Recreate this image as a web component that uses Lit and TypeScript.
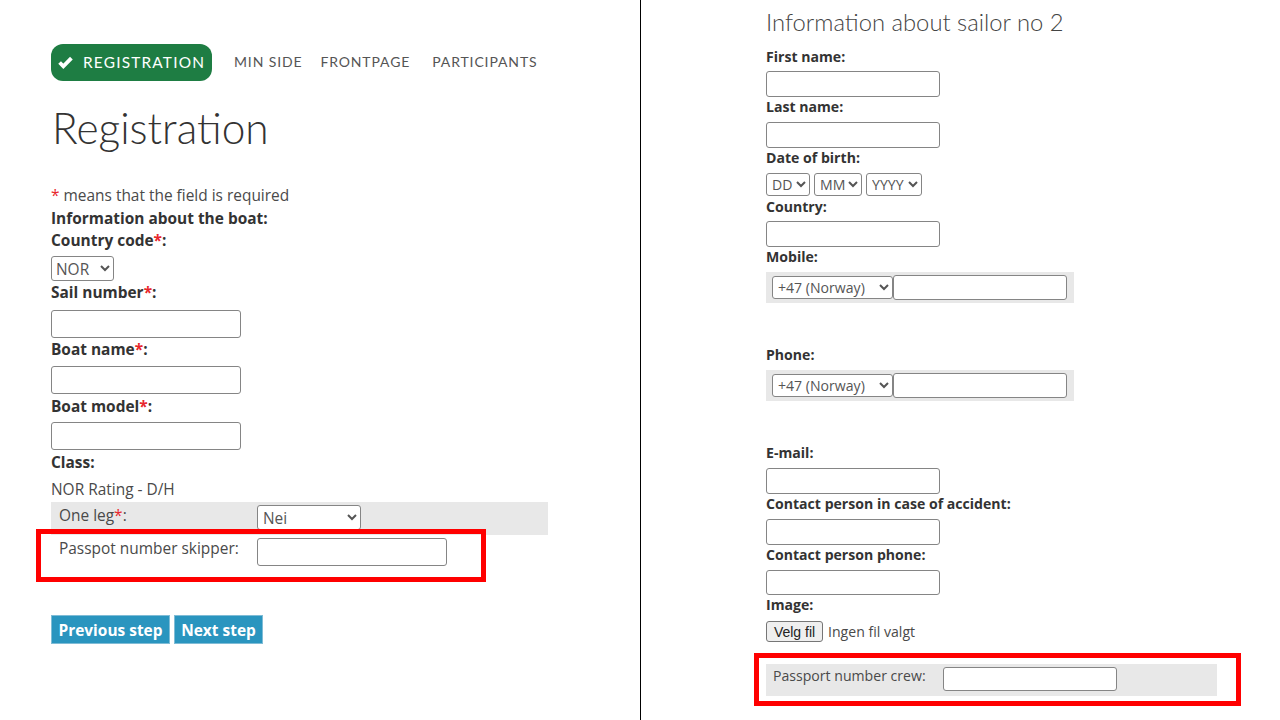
import { LitElement, html, css } from "lit";
import { customElement } from "lit/decorators.js";

@customElement("app-root")
export class AppRoot extends LitElement {
  static styles = css`
    :host { display: block; width: 1280px; height: 720px; position: relative; overflow: hidden; background: #fff; font-family: "Open Sans", sans-serif; color: #4a4a4a; }
    * { box-sizing: border-box; }
    .page { display: flex; height: 720px; }
    .left { width: 640px; padding: 44px 0 0 51px; font-size: 15.45px; }
    .divider { width: 1px; height: 720px; background: #000; }
    .right { flex: 1; padding: 0 0 0 125px; font-size: 14.1px; }
    .nav { display: flex; align-items: center; height: 37px; font-family: Lato, sans-serif; font-size: 14px; letter-spacing: 0.87px; color: #555; text-transform: uppercase; }
    .pill { display: flex; align-items: center; width: 161px; height: 37px; background: #1e7d43; color: #fff; border-radius: 12px; padding: 0 0 2px 7px; font-size: 15.4px; letter-spacing: 1.2px; margin-right: 22px; }
    .pill svg { width: 15px; height: 13px; margin-right: 10px; margin-top: 1px; }
    .nav .a { margin-right: 18px; padding-bottom: 2px; }
    .nav .b { margin-right: 22px; padding-bottom: 2px; }
    .nav .c { padding-bottom: 2px; }
    h1 { margin: 18px 0 0; padding-left: 1px; font: 300 42.4px/57px Lato, sans-serif; color: #333; height: 57px; }
    h2 { margin: 0; font: 300 23.8px/30px Lato, sans-serif; color: #444; height: 46.5px; padding-top: 7px; }
    .l { height: 22px; line-height: 22px; white-space: nowrap; }
    .r { height: 20px; line-height: 20px; white-space: nowrap; }
    b { font-weight: 700; color: #333; }
    .star { color: #e8262c; }
    .intro { margin-top: 28px; margin-bottom: 1px; }
    input, select { display: block; background: #fff; border: 1px solid #858585; border-radius: 3px; font-family: "Open Sans", sans-serif; font-size: inherit; color: #555; margin: 0; }
    select { padding: 0 0 0 1px; }
    input.lw { width: 190px; height: 28px; }
    input.rw { width: 174px; height: 26px; }
    input.rs { width: 174px; height: 25px; }
    .m1 { margin-top: 1px; }
    .m5 { margin-top: 5px; }
    .m6 { margin-top: 6px; }
    .m7 { margin-top: 7px; }
    .m4 { margin-top: 4.5px; }
    .m55 { margin-top: 5.5px; }
    .m42 { margin-top: 42px; }
    .code { width: 63px; height: 25px; padding-left: 0; }
    .row { display: flex; width: 497px; }
    .row > .t { width: 206px; padding-left: 8px; }
    .row1 { margin-top: 2px; height: 33px; background: #e8e8e8; padding-top: 3px; line-height: 21px; }
    .row1 select { width: 104px; height: 25px; }
    .row2 { height: 36px; padding-top: 3px; line-height: 21px; }
    .row2 input { width: 190px; height: 28px; }
    .buttons { display: flex; gap: 4px; margin-top: 44px; }
    .buttons button { height: 29px; background: #2a95bf; border: 1px solid #7fbcd6; color: #fff; font: 700 15.45px "Open Sans", sans-serif; padding: 0; }
    .prev { width: 119px; }
    .next { width: 89px; }
    .dob { display: flex; gap: 4px; margin-top: 5px; }
    .dob select { height: 23px; }
    .dd { width: 44px; } .mm { width: 48px; } .yy { width: 56px; }
    .tel { display: flex; align-items: center; width: 308px; height: 31px; margin-top: 5px; padding-left: 6px; background: #e8e8e8; }
    .tel select { width: 121px; height: 23px; }
    .tel input { width: 174px; height: 25px; margin-top: -1px; }
    .file { display: flex; align-items: center; margin-top: 6px; height: 21px; }
    .file button { width: 57px; height: 21px; background: #efefef; border: 1px solid #767676; border-radius: 3px; color: #222; font: 14px "Liberation Sans", sans-serif; padding: 0; margin-right: 5px; }
    .crew { display: flex; width: 451px; height: 32px; margin-top: 22px; background: #e8e8e8; padding: 3px 0 0 7px; line-height: 17px; }
    .crew span { width: 170px; }
    .crew input { width: 174px; height: 24px; }
    .mark { position: absolute; border: 5px solid #f00; pointer-events: none; }
    .mark.one { left: 36px; top: 529px; width: 450px; height: 53px; }
    .mark.two { left: 754px; top: 653px; width: 487px; height: 53px; }
  `;

  render() {
    const star = html`<span class="star">*</span>`;
    const tel = html`<div class="tel"><select><option>+47 (Norway)</option></select><input /></div>`;
    return html`
      <div class="page">
        <div class="left">
          <div class="nav">
            <div class="pill">
              <svg viewBox="0 0 14 12"><path d="M1.5 6 L5 9.5 L12.5 2" fill="none" stroke="#fff" stroke-width="3.6"/></svg>
              Registration
            </div>
            <div class="a">Min side</div>
            <div class="b">Frontpage</div>
            <div class="c">Participants</div>
          </div>
          <h1>Registration</h1>
          <div class="l intro">${star} means that the field is required</div>
          <div class="l"><b>Information about the boat:</b></div>
          <div class="l"><b>Country code${star}:</b></div>
          <select class="code m5"><option>NOR</option></select>
          <div class="l"><b>Sail number${star}:</b></div>
          <input class="lw m7" />
          <div class="l"><b>Boat name${star}:</b></div>
          <input class="lw m6" />
          <div class="l m1"><b>Boat model${star}:</b></div>
          <input class="lw m5" />
          <div class="l m1"><b>Class:</b></div>
          <div class="l m5">NOR Rating - D/H</div>
          <div class="row row1"><span class="t">One leg${star}:</span><select><option>Nei</option></select></div>
          <div class="row row2"><span class="t">Passpot number skipper:</span><input /></div>
          <div class="buttons">
            <button class="prev">Previous step</button>
            <button class="next">Next step</button>
          </div>
        </div>
        <div class="divider"></div>
        <div class="right">
          <h2>Information about sailor no 2</h2>
          <div class="r"><b>First name:</b></div>
          <input class="rw m4" />
          <div class="r"><b>Last name:</b></div>
          <input class="rw m4" />
          <div class="r"><b>Date of birth:</b></div>
          <div class="dob">
            <select class="dd"><option>DD</option></select>
            <select class="mm"><option>MM</option></select>
            <select class="yy"><option>YYYY</option></select>
          </div>
          <div class="r m1"><b>Country:</b></div>
          <input class="rw m4" />
          <div class="r"><b>Mobile:</b></div>
          ${tel}
          <div class="r m42"><b>Phone:</b></div>
          ${tel}
          <div class="r m42"><b>E-mail:</b></div>
          <input class="rw m4" />
          <div class="r"><b>Contact person in case of accident:</b></div>
          <input class="rw m55" />
          <div class="r"><b>Contact person phone:</b></div>
          <input class="rs m5" />
          <div class="r"><b>Image:</b></div>
          <div class="file"><button>Velg fil</button><span>Ingen fil valgt</span></div>
          <div class="crew"><span>Passport number crew:</span><input /></div>
        </div>
      </div>
      <div class="mark one"></div>
      <div class="mark two"></div>
    `;
  }
}
